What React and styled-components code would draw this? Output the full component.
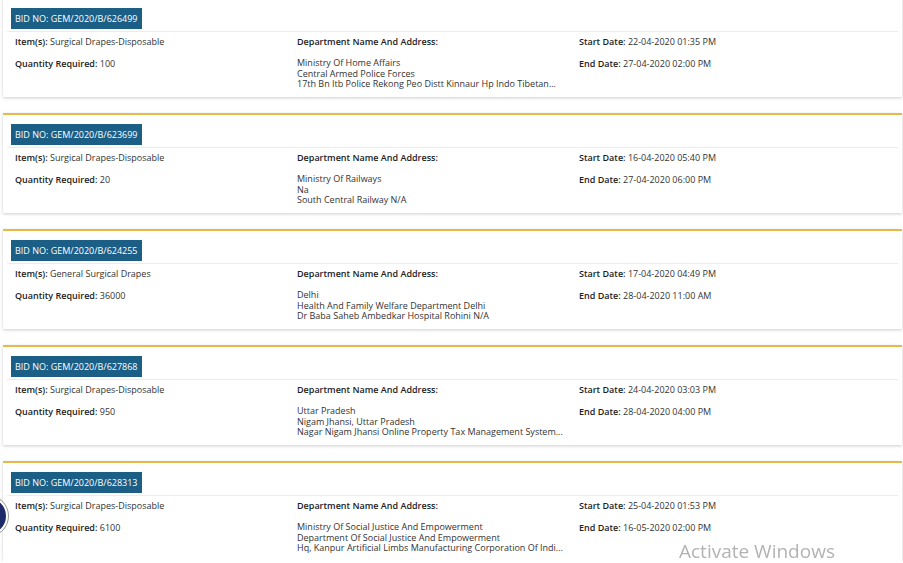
import React from "react";
import styled, { createGlobalStyle } from "styled-components";

const bids = [
  {
    no: "GEM/2020/B/626499",
    item: "Surgical Drapes-Disposable",
    qty: "100",
    address: [
      "Ministry Of Home Affairs",
      "Central Armed Police Forces",
      "17th Bn Itb Police Rekong Peo Distt Kinnaur Hp Indo Tibetan...",
    ],
    start: "22-04-2020 01:35 PM",
    end: "27-04-2020 02:00 PM",
  },
  {
    no: "GEM/2020/B/623699",
    item: "Surgical Drapes-Disposable",
    qty: "20",
    address: ["Ministry Of Railways", "Na", "South Central Railway N/A"],
    start: "16-04-2020 05:40 PM",
    end: "27-04-2020 06:00 PM",
  },
  {
    no: "GEM/2020/B/624255",
    item: "General Surgical Drapes",
    qty: "36000",
    address: [
      "Delhi",
      "Health And Family Welfare Department Delhi",
      "Dr Baba Saheb Ambedkar Hospital Rohini N/A",
    ],
    start: "17-04-2020 04:49 PM",
    end: "28-04-2020 11:00 AM",
  },
  {
    no: "GEM/2020/B/627868",
    item: "Surgical Drapes-Disposable",
    qty: "950",
    address: [
      "Uttar Pradesh",
      "Nigam Jhansi, Uttar Pradesh",
      "Nagar Nigam Jhansi Online Property Tax Management System...",
    ],
    start: "24-04-2020 03:03 PM",
    end: "28-04-2020 04:00 PM",
  },
  {
    no: "GEM/2020/B/628313",
    item: "Surgical Drapes-Disposable",
    qty: "6100",
    address: [
      "Ministry Of Social Justice And Empowerment",
      "Department Of Social Justice And Empowerment",
      "Hq, Kanpur Artificial Limbs Manufacturing Corporation Of Indi...",
    ],
    start: "25-04-2020 01:53 PM",
    end: "16-05-2020 02:00 PM",
  },
];

const App = () => {
  return (
    <>
      <GlobalStyle />
      <List>
        {bids.map((b) => (
          <Card key={b.no}>
            <CardHead>
              <Badge>BID NO: {b.no}</Badge>
            </CardHead>
            <CardBody>
              <Col>
                <Line>
                  <Label>Item(s):</Label> {b.item}
                </Line>
                <Line>
                  <Label>Quantity Required:</Label> {b.qty}
                </Line>
              </Col>
              <Col>
                <Line>
                  <Label>Department Name And Address:</Label>
                </Line>
                <Address>
                  {b.address.map((a, i) => (
                    <div key={i}>{a}</div>
                  ))}
                </Address>
              </Col>
              <Col>
                <Line>
                  <Label>Start Date:</Label> {b.start}
                </Line>
                <Line>
                  <Label>End Date:</Label> {b.end}
                </Line>
              </Col>
            </CardBody>
          </Card>
        ))}
      </List>
      <ChatBubble />
      <Watermark>Activate Windows</Watermark>
    </>
  );
};

const GlobalStyle = createGlobalStyle`
  html, body {
    margin: 0;
    padding: 0;
    background: #fff;
    overflow: hidden;
  }
  body {
    font-family: "Open Sans", "Noto Sans", sans-serif;
  }
`;

const List = styled.div`
  display: flex;
  flex-direction: column;
  gap: 16px;
  margin-top: -3px;
  padding: 0 1px 0 3px;
`;

const Card = styled.div`
  background: #fff;
  border-top: 2px solid #e8b84a;
  box-shadow: 0 1px 3px rgba(0, 0, 0, 0.2);
`;

const CardHead = styled.div`
  display: flex;
  margin: 0 4px;
  padding: 9px 0 2px 4px;
  border-bottom: 1px solid #ececec;
`;

const Badge = styled.span`
  height: 21px;
  line-height: 21px;
  padding: 0 4px;
  background: #1b5e86;
  color: #fff;
  font-size: 9px;
  font-weight: 400;
`;

const CardBody = styled.div`
  display: grid;
  grid-template-columns: repeat(3, 282px);
  padding: 3px 0 7.5px 12px;
`;

const Col = styled.div`
  display: flex;
  flex-direction: column;
  gap: 8px;
`;

const Line = styled.div`
  font-size: 9px;
  line-height: 14px;
  color: #333;
`;

const Label = styled.span`
  font-weight: 600;
  color: #222;
`;

const Address = styled.div`
  font-size: 9px;
  line-height: 10.5px;
  color: #333;
  margin-top: 1px;
`;

const ChatBubble = styled.div`
  position: fixed;
  left: -32px;
  top: 496px;
  width: 36px;
  height: 36px;
  border-radius: 50%;
  background: #1e2b6a;
  border: 2px solid #fff;
  box-shadow: 0 0 0 1px #9a9a9a;
`;

const Watermark = styled.div`
  position: fixed;
  left: 679px;
  top: 538px;
  font-size: 19px;
  color: #b3b3b3;
  pointer-events: none;
`;

export default App;
